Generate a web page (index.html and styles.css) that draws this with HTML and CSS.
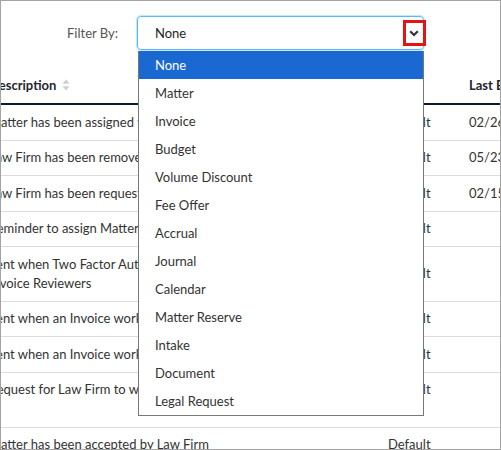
FILE: index.html
```html
<!DOCTYPE html>
<html lang="en">
	<head>
		<meta charset="UTF-8">
		<title>Notification Templates</title>
		<link rel="stylesheet" href="styles.css">
	</head>
	<body>
		<div class="frame">
			<div class="filter-bar">
				<span class="filter-label">Filter By:</span>
				<div class="select-wrap">
					<div class="select-box">
						<span class="select-value">None</span>
						<svg class="chevron" width="10" height="7" viewBox="0 0 10 7">
							<path d="M1.2 1.2 L5 5 L8.8 1.2" fill="none" stroke="#333" stroke-width="2.2"/>
						</svg>
					</div>
					<span class="callout"></span>
					<ul class="select-list">
						<li class="active">None</li>
						<li>Matter</li>
						<li>Invoice</li>
						<li>Budget</li>
						<li>Volume Discount</li>
						<li>Fee Offer</li>
						<li>Accrual</li>
						<li>Journal</li>
						<li>Calendar</li>
						<li>Matter Reserve</li>
						<li>Intake</li>
						<li>Document</li>
						<li>Legal Request</li>
					</ul>
				</div>
			</div>

			<div class="table-wrap">
				<table class="grid">
					<colgroup>
						<col class="col-desc">
						<col class="col-type">
						<col class="col-date">
					</colgroup>
					<thead>
						<tr>
							<th>Description
								<svg class="sort-icon" width="8" height="12" viewBox="0 0 8 12">
									<path d="M4 0.5 L7.5 4.8 L0.5 4.8 Z" fill="#cfcfcf"/>
									<path d="M4 11.5 L7.5 7.2 L0.5 7.2 Z" fill="#cfcfcf"/>
								</svg>
							</th>
							<th></th>
							<th>Last Edited</th>
						</tr>
					</thead>
					<tbody>
						<tr>
							<td>Matter has been assigned to Law Firm</td>
							<td>Default</td>
							<td>02/26/2021</td>
						</tr>
						<tr>
							<td>Law Firm has been removed from Matter</td>
							<td>Default</td>
							<td>05/23/2021</td>
						</tr>
						<tr>
							<td>Law Firm has been requested on Matter</td>
							<td>Default</td>
							<td>02/15/2021</td>
						</tr>
						<tr>
							<td>Reminder to assign Matter to Law Firm</td>
							<td>Default</td>
							<td></td>
						</tr>
						<tr>
							<td>Sent when Two Factor Authentication is enabled for<br>Invoice Reviewers</td>
							<td>Default</td>
							<td></td>
						</tr>
						<tr>
							<td>Sent when an Invoice workflow is approved</td>
							<td>Default</td>
							<td></td>
						</tr>
						<tr>
							<td>Sent when an Invoice workflow is rejected</td>
							<td>Default</td>
							<td></td>
						</tr>
						<tr class="row-tall">
							<td>Request for Law Firm to waive conflict</td>
							<td>Default</td>
							<td></td>
						</tr>
						<tr>
							<td>Matter has been accepted by Law Firm</td>
							<td>Default</td>
							<td></td>
						</tr>
					</tbody>
				</table>
			</div>
		</div>
	</body>
</html>
```

FILE: styles.css
```css
body {
	margin: 0;
	font-family: 'Lato', 'Liberation Sans', sans-serif;
	font-size: 13px;
	color: #333;
	background-color: #ffffff;
}

.frame {
	position: relative;
	width: 501px;
	height: 450px;
	box-sizing: border-box;
	border: 1px solid #a3a3a3;
	overflow: hidden;
}

.filter-bar {
	display: flex;
	align-items: center;
	gap: 19px;
	padding-top: 15px;
}

.filter-label {
	width: 117px;
	text-align: right;
	color: #555;
}

.select-wrap {
	position: relative;
	width: 287px;
}

.select-box {
	display: flex;
	align-items: center;
	justify-content: space-between;
	height: 34px;
	box-sizing: border-box;
	padding: 0 4px 0 17px;
	border: 1px solid #5bb9ee;
	border-radius: 4px;
	box-shadow: 0 0 0 1px #c4e7fa;
	color: #222;
}

.callout {
	position: absolute;
	top: 4px;
	right: -2px;
	width: 23px;
	height: 26px;
	box-sizing: border-box;
	border: 3px solid #e41414;
}

.select-list {
	position: absolute;
	top: 35px;
	left: 1px;
	z-index: 2;
	width: 286px;
	box-sizing: border-box;
	margin: 0;
	padding: 0;
	list-style: none;
	background-color: #fff;
	border: 1px solid #777;
	border-top: none;
}

.select-list li {
	height: 28px;
	line-height: 28px;
	padding-left: 16px;
	color: #333;
}

.select-list li.active {
	background-color: #1a68d1;
	color: #fff;
}

.table-wrap {
	margin-top: 18px;
}

.grid {
	width: 600px;
	margin-left: -22px;
	table-layout: fixed;
	border-collapse: collapse;
}

.col-desc { width: 399px; }
.col-type { width: 81px; }
.col-date { width: 120px; }

.grid th,
.grid td {
	padding: 7.75px 10px;
	line-height: 19px;
	text-align: left;
	white-space: nowrap;
	overflow: hidden;
	vertical-align: middle;
}

.grid th {
	padding-top: 8px;
	padding-bottom: 8px;
	font-weight: 700;
	color: #1f2530;
	border-bottom: 2px solid #0d1a2b;
}

.grid td {
	border-bottom: 1px solid #dcdcdc;
}

.sort-icon {
	margin-left: 2px;
	vertical-align: -1px;
}

.row-tall td {
	height: 38.5px;
	vertical-align: top;
}
```
